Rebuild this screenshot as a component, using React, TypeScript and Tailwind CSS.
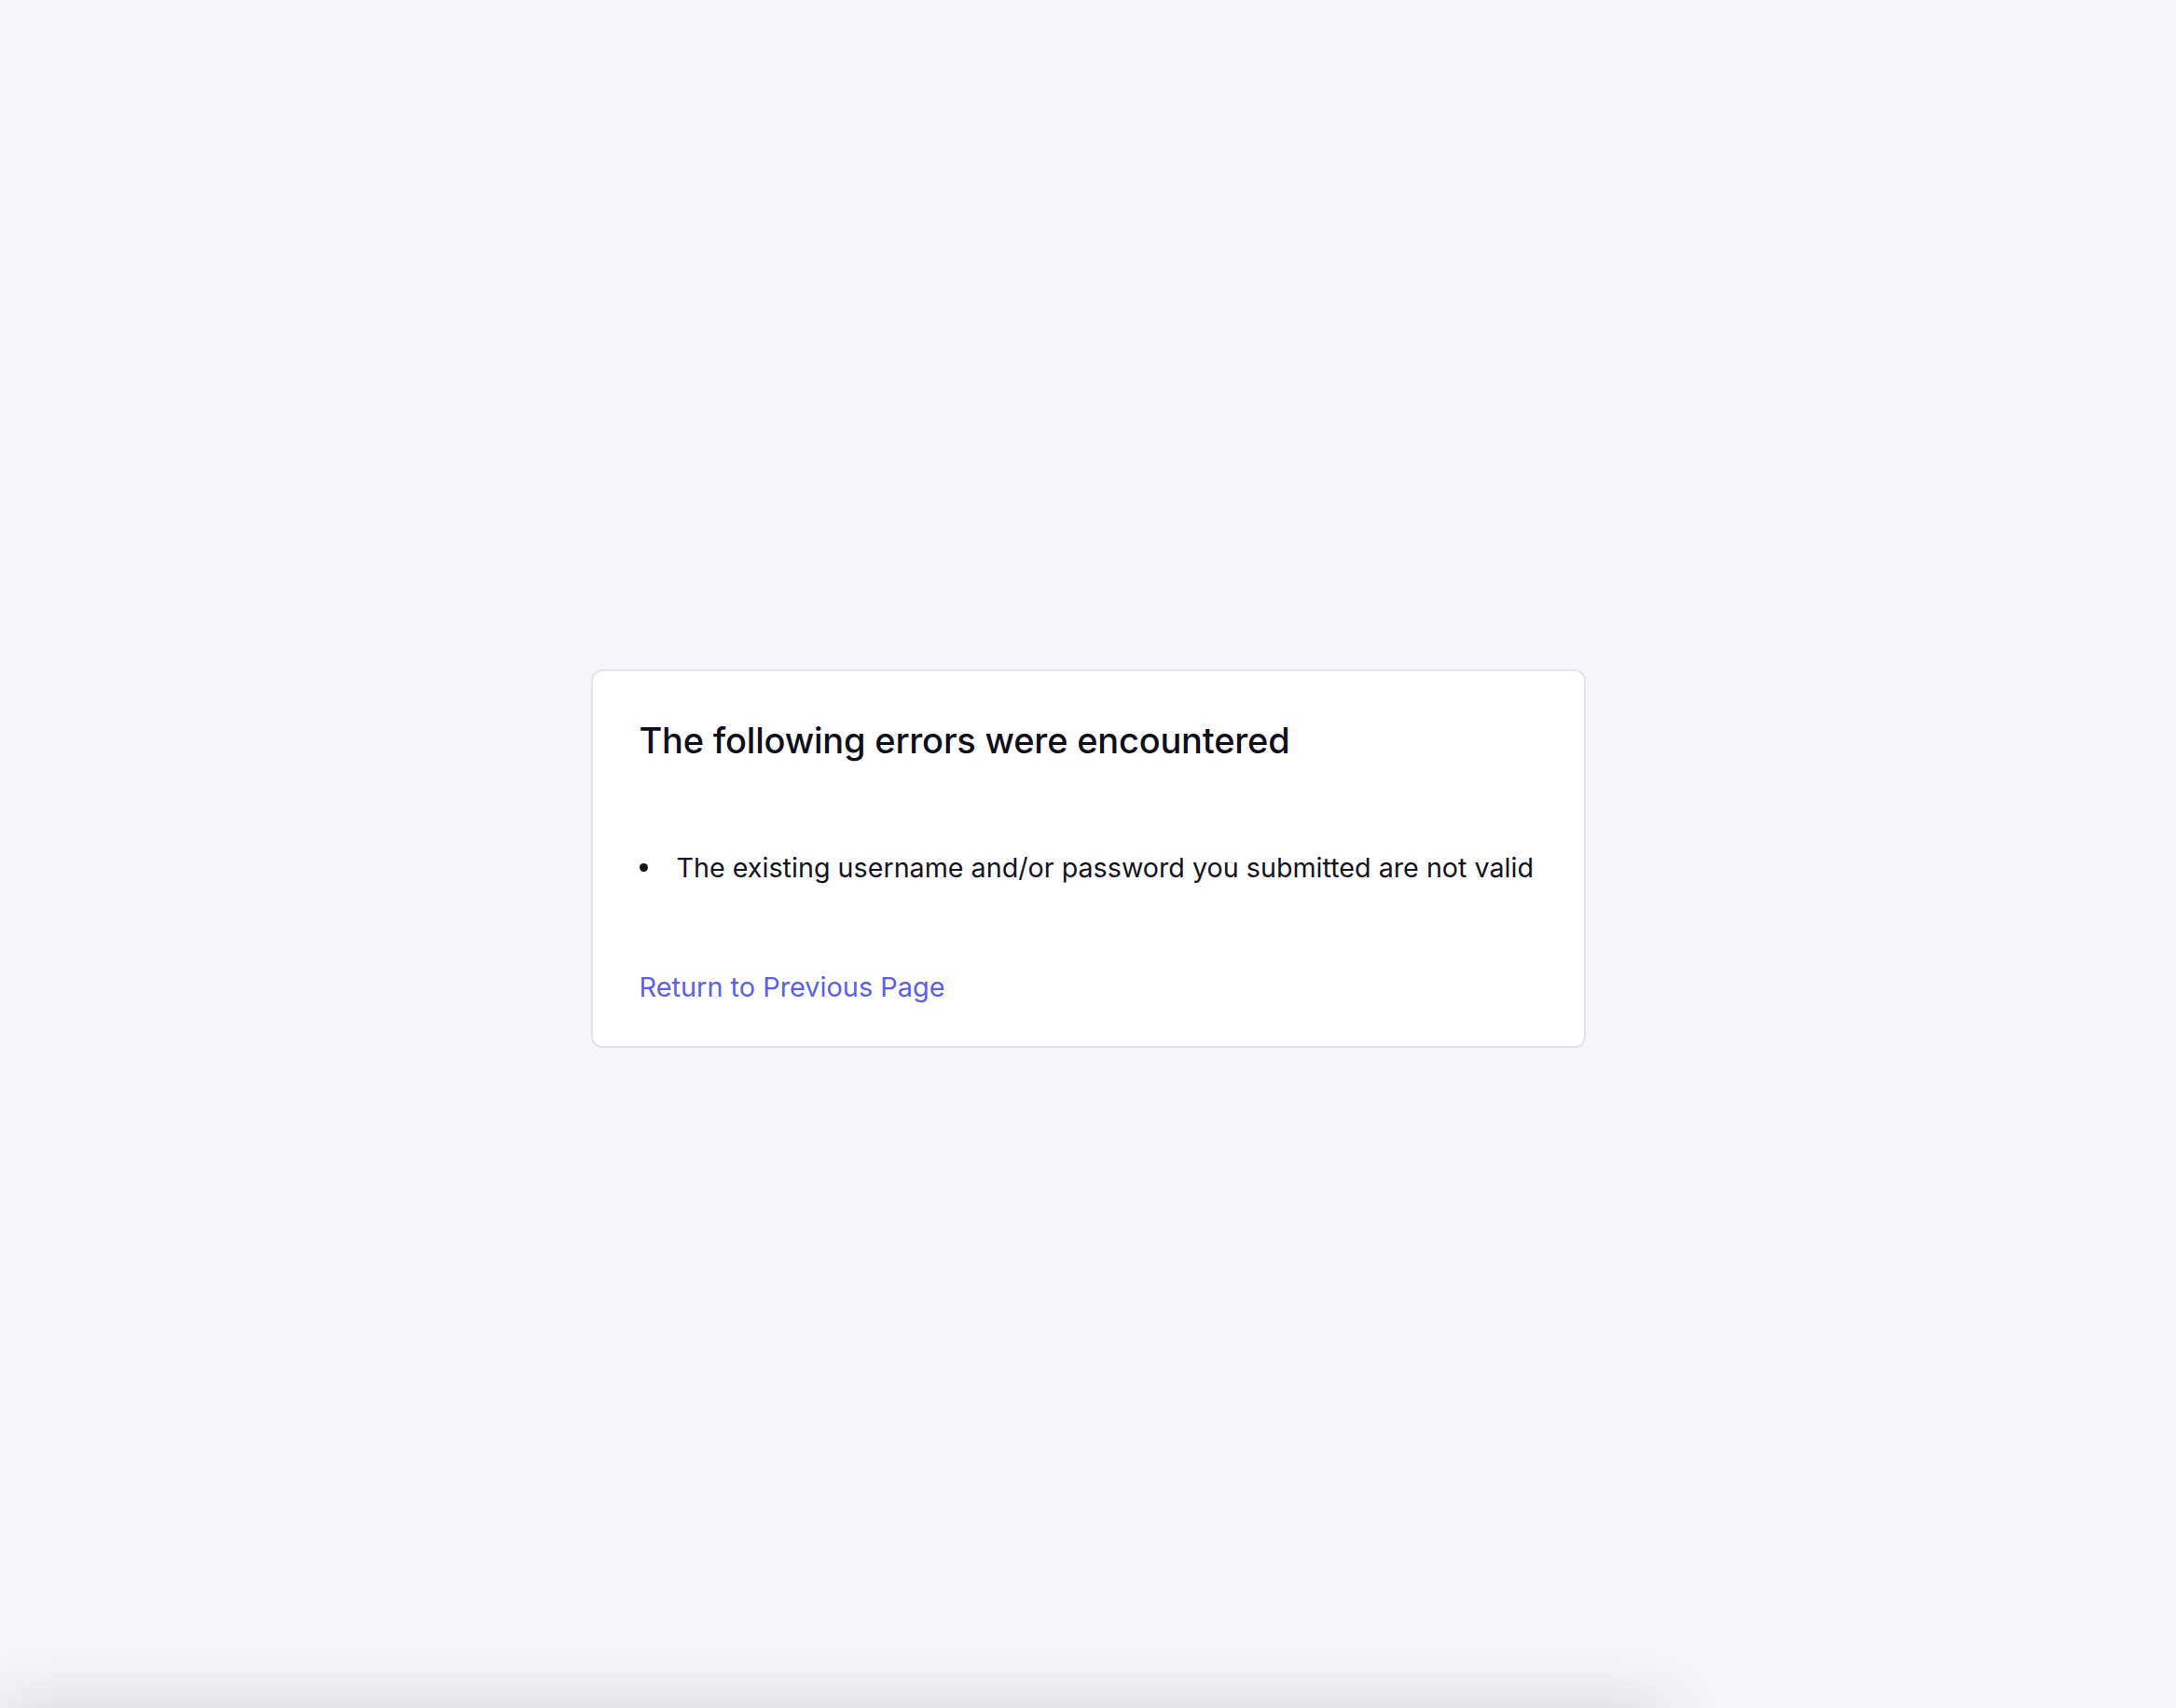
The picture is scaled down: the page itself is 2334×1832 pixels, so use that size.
const ERRORS = ['The existing username and/or password you submitted are not valid']

export default function App() {
  return (
    <div className="relative flex min-h-screen items-center justify-center overflow-hidden bg-[#f6f6fa] pt-[9px] font-['Inter','Liberation_Sans',sans-serif] antialiased">
      <div className="w-[1067px] rounded-[12px] border-2 border-[#e3e3ef] bg-white px-[50px] pt-[50px] pb-[42px]">
        <h1 className="text-[38px] font-medium leading-[48px] tracking-[-0.2px] text-[#0f0f1c]">
          The following errors were encountered
        </h1>

        <ul className="mt-[92px] text-[28.7px] leading-[42px] text-[#14141f]">
          {ERRORS.map((err) => (
            <li key={err} className="flex items-center gap-[31px] whitespace-nowrap">
              <span aria-hidden className="block size-[9px] shrink-0 rounded-full bg-[#14141f]" />
              <span>{err}</span>
            </li>
          ))}
        </ul>

        <a href="#" className="mt-[86px] block w-fit text-[28.9px] leading-[42px] text-[#5b5ff0]">
          Return to Previous Page
        </a>
      </div>

      <div
        aria-hidden
        className="pointer-events-none fixed left-0 top-full h-20 w-[1786px] bg-[#e4e4e8] shadow-[0_0_70px_rgba(0,0,0,0.14)]"
      />
    </div>
  )
}
